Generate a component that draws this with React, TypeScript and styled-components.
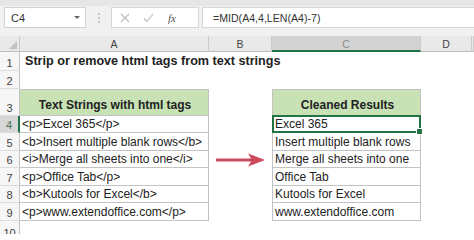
import * as React from 'react';
import styled, {createGlobalStyle} from 'styled-components';

const GlobalStyle = createGlobalStyle`
  html, body {
    margin: 0;
    padding: 0;
    background: #ffffff;
  }
  body {
    font-family: "Liberation Sans", Arial, sans-serif;
    width: 474px;
    height: 234px;
    overflow: hidden;
  }
`;

const Root = styled.div`
  width: 474px;
  height: 234px;
  overflow: hidden;
  background: #ffffff;
`;

/* ---------- formula bar ---------- */

const FormulaBar = styled.div`
  height: 36px;
  box-sizing: border-box;
  background: #f1f1f1;
  border-top: 6px solid #e6e6e6;
  padding: 1px 0 0 4px;
  display: flex;
  align-items: flex-start;
`;

const NameBox = styled.div`
  width: 82px;
  height: 21px;
  box-sizing: border-box;
  background: #ffffff;
  border: 1px solid #d2d2d2;
  display: flex;
  align-items: center;
  justify-content: space-between;
  padding: 0 5px 0 6px;
  font-size: 11px;
  color: #333333;
`;

const DropArrow = styled.span`
  width: 0;
  height: 0;
  border-left: 3px solid transparent;
  border-right: 3px solid transparent;
  border-top: 3px solid #666666;
`;

const Grip = styled.div`
  width: 25px;
  height: 21px;
  display: flex;
  flex-direction: column;
  align-items: center;
  justify-content: center;
  gap: 2px;

  span {
    width: 2px;
    height: 2px;
    border-radius: 1px;
    background: #b8b8b8;
  }
`;

const ButtonBox = styled.div`
  width: 88px;
  height: 21px;
  box-sizing: border-box;
  background: #ffffff;
  border: 1px solid #d6d6d6;
  display: flex;
  align-items: center;
  padding-left: 8px;
  gap: 13px;
`;

const FxLabel = styled.span`
  font-family: "Liberation Serif", "Times New Roman", serif;
  font-style: italic;
  font-size: 11px;
  color: #555555;
  margin-left: 1px;
`;

const FormulaInput = styled.div`
  flex: 1;
  height: 21px;
  margin-left: 3px;
  box-sizing: border-box;
  background: #ffffff;
  border: 1px solid #d6d6d6;
  border-right: none;
  display: flex;
  align-items: center;
  padding-left: 10px;
  font-size: 10.6px;
  color: #333333;
`;

/* ---------- sheet ---------- */

const Sheet = styled.div`
  display: grid;
  grid-template-columns: 20px 189px 63px 149px 51px 1fr;
  grid-template-rows: 16px 19px 18px 27px 17px 18px 17px 18px 17px 18px 20px;
`;

const Corner = styled.div`
  background: #e9e9e9;
  border-right: 1px solid #c9c9c9;
  border-bottom: 1px solid #bdbdbd;
  box-sizing: border-box;
  position: relative;

  &::after {
    content: '';
    position: absolute;
    right: 2px;
    bottom: 2px;
    width: 0;
    height: 0;
    border-left: 8px solid transparent;
    border-bottom: 8px solid #c3c3c3;
  }
`;

interface ActiveProps {
  $active?: boolean;
}

const ColHead = styled.div<ActiveProps>`
  box-sizing: border-box;
  background: ${p => (p.$active ? '#d3d3d3' : '#e9e9e9')};
  border-right: 1px solid #cbcbcb;
  border-bottom: ${p => (p.$active ? '2px solid #217346' : '1px solid #bdbdbd')};
  display: flex;
  align-items: center;
  justify-content: center;
  font-size: 10.5px;
  color: ${p => (p.$active ? '#8a8a8a' : '#444444')};
  padding-top: 1px;
`;

const RowHead = styled.div<ActiveProps>`
  box-sizing: border-box;
  background: ${p => (p.$active ? '#d7d7d7' : '#f6f6f6')};
  border-right: ${p => (p.$active ? '2px solid #217346' : '1px solid #c2c2c2')};
  border-bottom: 1px solid #dddddd;
  display: flex;
  align-items: flex-end;
  justify-content: center;
  padding-bottom: 1px;
  font-size: 11px;
  color: ${p => (p.$active ? '#4c6f5a' : '#444444')};
`;

const Blank = styled.div``;

const TitleCell = styled.div`
  grid-column: 2 / span 5;
  display: flex;
  align-items: flex-end;
  padding: 0 0 3px 5px;
  font-size: 12.6px;
  font-weight: bold;
  color: #222222;
  white-space: nowrap;
`;

interface CellProps {
  $top?: boolean;
  $left?: boolean;
  $head?: boolean;
}

const Cell = styled.div<CellProps>`
  box-sizing: border-box;
  border-right: 1px solid #c3c3c3;
  border-bottom: 1px solid #c3c3c3;
  border-top: ${p => (p.$top ? '1px solid #c3c3c3' : 'none')};
  border-left: ${p => (p.$left ? '1px solid #c3c3c3' : 'none')};
  background: ${p => (p.$head ? '#c8e2b6' : '#ffffff')};
  display: flex;
  align-items: flex-end;
  justify-content: ${p => (p.$head ? 'center' : 'flex-start')};
  padding: 0 0 ${p => (p.$head ? '3px' : '1px')} 2px;
  font-size: 12px;
  font-weight: ${p => (p.$head ? 'bold' : 'normal')};
  color: #222222;
  white-space: nowrap;
  overflow: hidden;
  position: relative;
`;

const Selection = styled.div`
  position: absolute;
  left: -1px;
  top: -1px;
  right: -1px;
  bottom: -1px;
  border: 2px solid #217346;
  pointer-events: none;

  &::after {
    content: '';
    position: absolute;
    right: -4px;
    bottom: -4px;
    width: 5px;
    height: 5px;
    background: #217346;
    border: 1px solid #ffffff;
  }
`;

const ArrowCell = styled.div`
  display: flex;
  align-items: center;
  padding: 1px 0 0 7px;
`;

const SelCell = styled(Cell)`
  overflow: visible;
  z-index: 1;
`;

const rows: string[] = [
  'Excel 365',
  'Insert multiple blank rows',
  'Merge all sheets into one',
  'Office Tab',
  'Kutools for Excel',
  'www.extendoffice.com',
];

const tags: string[] = ['p', 'b', 'i', 'p', 'b', 'p'];

const Arrow: React.FC = () => (
  <svg width="50" height="16" viewBox="0 0 50 16">
    <path d="M1 8 H38" stroke="#cd4a5e" strokeWidth="3.2" strokeLinecap="round" fill="none" />
    <path d="M32 1.5 L49 8 L32 14.5 L36 8 Z" fill="#cd4a5e" />
  </svg>
);

const App: React.FC = () => {
  return (
    <Root>
      <GlobalStyle />
      <FormulaBar>
        <NameBox>
          <span>C4</span>
          <DropArrow />
        </NameBox>
        <Grip>
          <span />
          <span />
          <span />
        </Grip>
        <ButtonBox>
          <svg width="10" height="10" viewBox="0 0 10 10">
            <path d="M1 1 L9 9 M9 1 L1 9" stroke="#bcbcbc" strokeWidth="1.1" fill="none" />
          </svg>
          <svg width="11" height="10" viewBox="0 0 11 10">
            <path d="M1 5.5 L4 8.5 L10 1" stroke="#bcbcbc" strokeWidth="1.1" fill="none" />
          </svg>
          <FxLabel>fx</FxLabel>
        </ButtonBox>
        <FormulaInput>=MID(A4,4,LEN(A4)-7)</FormulaInput>
      </FormulaBar>

      <Sheet>
        <Corner />
        <ColHead>A</ColHead>
        <ColHead>B</ColHead>
        <ColHead $active>C</ColHead>
        <ColHead>D</ColHead>
        <ColHead />

        <RowHead>1</RowHead>
        <TitleCell>Strip or remove html tags from text strings</TitleCell>

        <RowHead>2</RowHead>
        <Blank />
        <Blank />
        <Blank />
        <Blank />
        <Blank />

        <RowHead>3</RowHead>
        <Cell $top $head>Text Strings with html tags</Cell>
        <Blank />
        <Cell $top $left $head>Cleaned Results</Cell>
        <Blank />
        <Blank />

        {rows.map((text, i) => (
          <React.Fragment key={text}>
            <RowHead $active={i === 0}>{i + 4}</RowHead>
            <Cell>{`<${tags[i]}>${text}</${tags[i]}>`}</Cell>
            {i === 2 ? (
              <ArrowCell>
                <Arrow />
              </ArrowCell>
            ) : (
              <Blank />
            )}
            {i === 0 ? (
              <SelCell $left>
                {text}
                <Selection />
              </SelCell>
            ) : (
              <Cell $left>{text}</Cell>
            )}
            <Blank />
            <Blank />
          </React.Fragment>
        ))}

        <RowHead>10</RowHead>
      </Sheet>
    </Root>
  );
};

export default App;
